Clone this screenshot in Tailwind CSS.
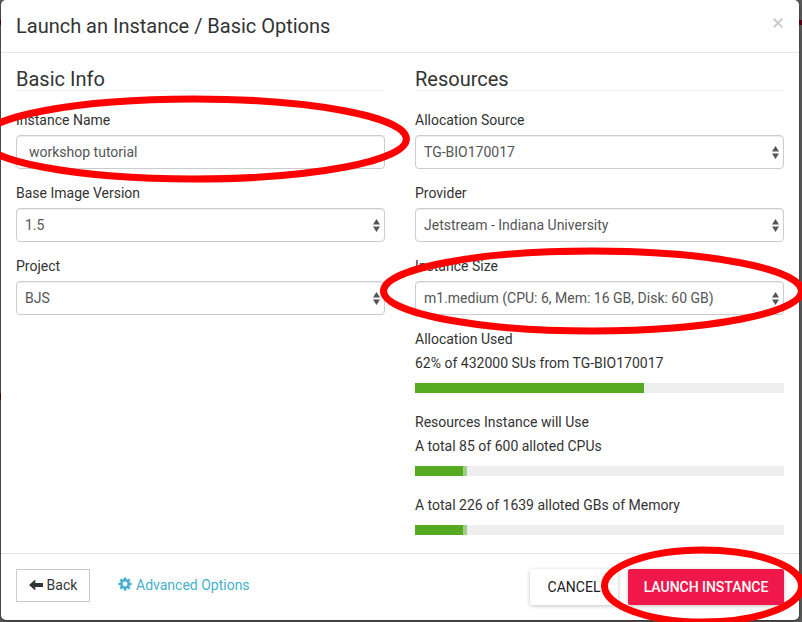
<!DOCTYPE html>
<html lang="en">
<head>
<meta charset="utf-8">
<title>Launch an Instance</title>
<script src="https://cdn.jsdelivr.net/npm/@tailwindcss/browser@4"></script>
</head>
<body class="w-[802px] h-[622px] overflow-hidden bg-[#5a5a5a] pl-px font-[Roboto,sans-serif] text-[14px] leading-5 text-[#333] relative">
<div class="absolute right-0 top-5 w-1 h-[5px] bg-[#5c0018]"></div>
<div class="absolute left-0 top-5 w-px h-[5px] bg-[#5c0018]"></div>
<div class="absolute left-0 top-[393px] w-px h-[7px] bg-[#4a1008]"></div>
<main class="relative w-[798px] h-[620px] bg-white rounded-[5px] flex flex-col shadow-[0_1px_3px_#0008]">
  <header class="h-[53px] shrink-0 border-b border-[#e5e5e5] flex justify-between px-[15px]">
    <h1 class="text-[20px] leading-[52px] tracking-[-0.01px]">Launch an Instance / Basic Options</h1>
    <button class="w-3 h-[46px] flex items-center justify-center" aria-label="Close"><svg width="10" height="10" viewBox="0 0 10 10" stroke="#ccc" stroke-width="2"><path d="M.8.8l8.4 8.4M9.2.8L.8 9.2"/></svg></button>
  </header>
  <section class="h-[500px] shrink-0 grid grid-cols-2 gap-[30px] px-[15px] pt-[15px]">
    <div>
      <h2 class="h-[23px] border-b border-[#eee] text-[20px] leading-[22px]">Basic Info</h2>
      <label class="block mt-[19px] h-[25px]">Instance Name</label>
      <div class="h-[34px] border border-[#ccc] rounded-[4px] px-3 leading-8 text-[#555] shadow-[inset_0_1px_1px_#00000013]">workshop tutorial</div>
      <label class="block mt-[14px] h-[25px]">Base Image Version</label>
      <div class="h-[34px] border border-[#ccc] rounded-[4px] pl-2 pr-1 leading-8 text-[#555] flex justify-between items-center shadow-[inset_0_1px_1px_#00000013]"><span>1.5</span><svg width="7" height="13" viewBox="0 0 7 13" fill="#555"><path d="M0 5.5L3.5 0 7 5.5zM0 7.5h7L3.5 13z"/></svg></div>
      <label class="block mt-[14px] h-[25px]">Project</label>
      <div class="h-[34px] border border-[#ccc] rounded-[4px] pl-2 pr-1 leading-8 text-[#555] flex justify-between items-center shadow-[inset_0_1px_1px_#00000013]"><span>BJS</span><svg width="7" height="13" viewBox="0 0 7 13" fill="#555"><path d="M0 5.5L3.5 0 7 5.5zM0 7.5h7L3.5 13z"/></svg></div>
    </div>
    <div>
      <h2 class="h-[23px] border-b border-[#eee] text-[20px] leading-[22px]">Resources</h2>
      <label class="block mt-[19px] h-[25px]">Allocation Source</label>
      <div class="h-[34px] border border-[#ccc] rounded-[4px] pl-2 pr-1 leading-8 text-[#555] flex justify-between items-center shadow-[inset_0_1px_1px_#00000013]"><span>TG-BIO170017</span><svg width="7" height="13" viewBox="0 0 7 13" fill="#555"><path d="M0 5.5L3.5 0 7 5.5zM0 7.5h7L3.5 13z"/></svg></div>
      <label class="block mt-[14px] h-[25px]">Provider</label>
      <div class="h-[34px] border border-[#ccc] rounded-[4px] pl-2 pr-1 leading-8 text-[#555] flex justify-between items-center shadow-[inset_0_1px_1px_#00000013]"><span>Jetstream - Indiana University</span><svg width="7" height="13" viewBox="0 0 7 13" fill="#555"><path d="M0 5.5L3.5 0 7 5.5zM0 7.5h7L3.5 13z"/></svg></div>
      <label class="block mt-[14px] h-[25px]">Instance Size</label>
      <div class="h-[34px] border border-[#ccc] rounded-[4px] pl-2 pr-1 leading-8 text-[#555] flex justify-between items-center shadow-[inset_0_1px_1px_#00000013]"><span>m1.medium (CPU: 6, Mem: 16 GB, Disk: 60 GB)</span><svg width="7" height="13" viewBox="0 0 7 13" fill="#555"><path d="M0 5.5L3.5 0 7 5.5zM0 7.5h7L3.5 13z"/></svg></div>
      <h3 class="mt-[14px] h-6">Allocation Used</h3>
      <p>62% of 432000 SUs from TG-BIO170017</p>
      <div class="mt-[10px] h-[10px] bg-[#eee] flex"><div class="bg-[#56aa21]" style="width:62%"></div></div>
      <h3 class="mt-[19px] h-6">Resources Instance will Use</h3>
      <p>A total 85 of 600 alloted CPUs</p>
      <div class="mt-[10px] h-[10px] bg-[#eee] flex"><div class="bg-[#56aa21]" style="width:13%"></div><div class="bg-[#a2cf87]" style="width:1%"></div></div>
      <p class="mt-[19px]">A total 226 of 1639 alloted GBs of Memory</p>
      <div class="mt-[10px] h-[10px] bg-[#eee] flex"><div class="bg-[#56aa21]" style="width:13%"></div><div class="bg-[#a2cf87]" style="width:1%"></div></div>
    </div>
  </section>
  <footer class="flex-1 border-t border-[#e5e5e5] px-[15px] pt-[15px] flex items-start">
    <button class="w-[74px] h-[33px] border border-[#ccc] pb-[2px] flex items-center justify-center gap-1"><svg width="14" height="12" viewBox="0 0 14 12" fill="#333"><path d="M0 6L6.3.6v3.5H14v3.8H6.3v3.5z"/></svg>Back</button>
    <a class="ml-7 h-[31px] flex items-center gap-1 text-[#46b0cd]"><svg class="mb-px" width="14" height="14" viewBox="0 0 14 14"><g stroke="#46b0cd" stroke-width="2.7"><path d="M7 .4v13.2M.4 7h13.2M2.4 2.4l9.2 9.2M11.6 2.4l-9.2 9.2"/></g><circle cx="7" cy="7" r="4.9" fill="#46b0cd"/><circle cx="7" cy="7" r="2.4" fill="#fff"/></svg>Advanced Options</a>
    <button class="ml-auto w-[88px] h-9 rounded-[2px] text-[#212121] shadow-[0_1px_4px_#0000003d]">CANCEL</button>
    <button class="ml-[10px] w-[156px] h-9 rounded-[2px] bg-[#f0174b] text-white font-medium tracking-[-0.03px] shadow-[0_1px_4px_#0000003d]">LAUNCH INSTANCE</button>
  </footer>
</main>
<svg class="absolute left-0 top-0 pointer-events-none" width="802" height="622" viewBox="0 0 802 622" fill="none" stroke="#f00" stroke-width="7">
  <ellipse cx="194" cy="139" rx="212.4" ry="40"/>
  <ellipse cx="592.5" cy="291" rx="209" ry="40"/>
  <ellipse cx="703" cy="586" rx="98.5" ry="36"/>
</svg>
</body>
</html>
